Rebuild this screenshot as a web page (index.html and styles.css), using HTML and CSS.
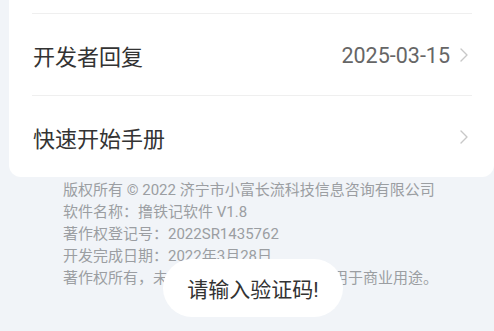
FILE: index.html
```html
<!DOCTYPE html>
<html lang="zh-CN">
<head>
<meta charset="utf-8">
<title>关于</title>
<link rel="stylesheet" href="styles.css">
</head>
<body>
  <div class="card">
    <div class="row row-hidden"></div>
    <div class="row">
      <span class="label">开发者回复</span>
      <span class="value">2025-03-15</span>
      <svg class="chev" width="8" height="14" viewBox="0 0 8 14"><path d="M1 1 L7 7 L1 13" fill="none" stroke="#c8c8c8" stroke-width="1.4" stroke-linecap="round" stroke-linejoin="round"/></svg>
    </div>
    <div class="row">
      <span class="label">快速开始手册</span>
      <span class="value"></span>
      <svg class="chev" width="8" height="14" viewBox="0 0 8 14"><path d="M1 1 L7 7 L1 13" fill="none" stroke="#c8c8c8" stroke-width="1.4" stroke-linecap="round" stroke-linejoin="round"/></svg>
    </div>
  </div>
  <div class="footer">
    <p>版权所有 © 2022 济宁市小富长流科技信息咨询有限公司</p>
    <p>软件名称：撸铁记软件 V1.8</p>
    <p>著作权登记号：2022SR1435762</p>
    <p>开发完成日期：2022年3月28日</p>
    <p>著作权所有，未经授权不得复制、传播或用于商业用途。</p>
  </div>
  <div class="toast">请输入验证码!</div>
</body>
</html>
```
FILE: styles.css
```css
html, body {
  margin: 0;
  padding: 0;
}
body {
  background: #f1f4f8;
  font-family: Roboto, "Noto Sans CJK SC", sans-serif;
  width: 494px;
  height: 331px;
  overflow: hidden;
  position: relative;
}
.card {
  background: #ffffff;
  margin: -69px 0 0 9px;
  border-radius: 0 0 12px 12px;
}
.row {
  height: 81px;
  margin: 0 22px 0 23px;
  border-top: 1px solid #efefef;
  display: flex;
  align-items: center;
  padding-left: 1px;
}
.row-hidden {
  height: 82px;
  border-top: none;
}
.label {
  font-size: 22px;
  color: #333333;
  flex: 1;
  padding-top: 1px;
}
.value {
  font-size: 21.5px;
  color: #666666;
  padding-top: 1px;
}
.chev {
  margin-left: 10px;
  margin-right: 4px;
  flex: none;
}
.footer {
  padding: 2px 0 0 63px;
  color: #9b9ea2;
  font-size: 15px;
  line-height: 22px;
}
.footer p {
  margin: 0;
}
.toast {
  position: absolute;
  left: 163px;
  top: 259px;
  width: 180px;
  height: 58px;
  border-radius: 29px;
  background: #ffffff;
  color: #333333;
  font-size: 21px;
  display: flex;
  align-items: center;
  justify-content: center;
}
```
